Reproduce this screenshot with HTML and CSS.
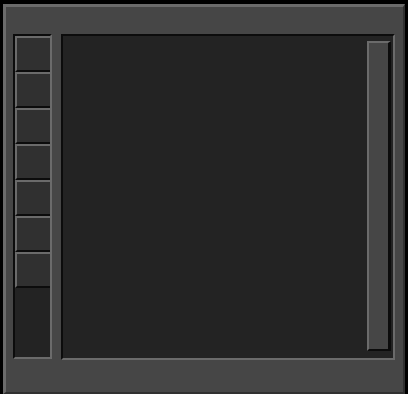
FILE: index.html
```html
<!DOCTYPE html>
<html>
<head>
<meta charset="utf-8">
<link rel="stylesheet" href="styles.css">
</head>
<body>
<div class="window">
  <div class="content">
    <div class="sidebar">
      <div class="tool"></div>
      <div class="tool"></div>
      <div class="tool"></div>
      <div class="tool"></div>
      <div class="tool"></div>
      <div class="tool"></div>
      <div class="tool"></div>
    </div>
    <div class="main">
      <div class="area"></div>
      <div class="scrollbar"></div>
    </div>
  </div>
</div>
</body>
</html>
```
FILE: styles.css
```css
html, body {
  margin: 0;
  padding: 0;
  background: #000;
  width: 408px;
  height: 394px;
  overflow: hidden;
}
.window {
  box-sizing: border-box;
  margin: 4px 0 0 3px;
  width: 402px;
  height: 390px;
  background: #464646;
  border-top: 3px solid #6b6b6b;
  border-left: 3px solid #6b6b6b;
  border-right: 2px solid #303030;
  border-bottom: 2px solid #303030;
}
.content {
  display: flex;
  align-items: flex-start;
  gap: 9px;
  padding: 27px 0 0 7px;
}
.sidebar {
  box-sizing: border-box;
  width: 39px;
  height: 325px;
  background: #232323;
  border-top: 2px solid #0c0c0c;
  border-left: 2px solid #0c0c0c;
  border-right: 2px solid #6b6b6b;
  border-bottom: 2px solid #6b6b6b;
  display: flex;
  flex-direction: column;
}
.tool {
  box-sizing: border-box;
  height: 36px;
  background: #303030;
  border-top: 2px solid #6b6b6b;
  border-left: 2px solid #6b6b6b;
  border-bottom: 2px solid #0c0c0c;
}
.main {
  box-sizing: border-box;
  width: 334px;
  height: 326px;
  background: #232323;
  border-top: 2px solid #0c0c0c;
  border-left: 2px solid #0c0c0c;
  border-right: 2px solid #6b6b6b;
  border-bottom: 2px solid #6b6b6b;
  display: flex;
  padding: 5px 2px 7px 0;
}
.area {
  flex: 1;
}
.scrollbar {
  box-sizing: border-box;
  width: 24px;
  height: 310px;
  background: #464646;
  border-top: 2px solid #6b6b6b;
  border-left: 2px solid #6b6b6b;
  border-right: 3px solid #0c0c0c;
  border-bottom: 2px solid #0c0c0c;
}
```
